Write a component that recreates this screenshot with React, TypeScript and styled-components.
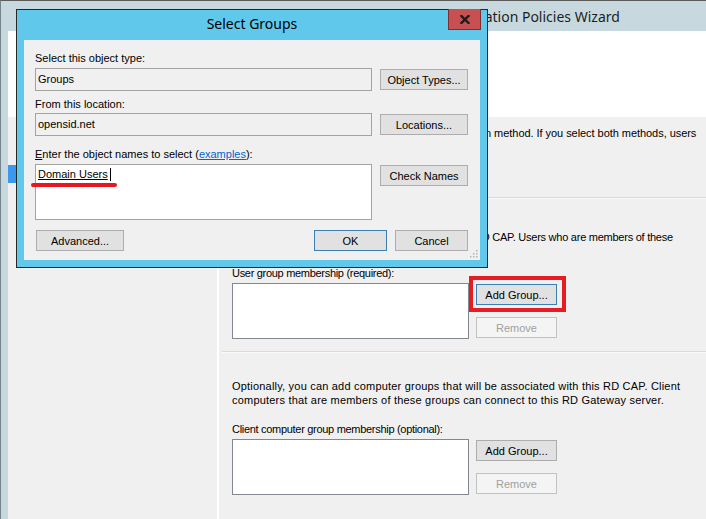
import React from 'react';
import styled, { createGlobalStyle } from 'styled-components';

const GlobalStyle = createGlobalStyle`
  html, body {
    margin: 0;
    padding: 0;
  }
  body {
    width: 706px;
    height: 519px;
    overflow: hidden;
    background: #f0f0f0;
    font-family: "Liberation Sans", Arial, sans-serif;
    font-size: 11px;
    color: #000;
  }
`;

export default function App() {
  return (
    <StScreen>
      <GlobalStyle />
      <StWizard>
        <StWizardTitleBar>New Authorization Policies Wizard</StWizardTitleBar>
        <StWizardHeader>
          <StHeaderTitle>Requirements</StHeaderTitle>
        </StWizardHeader>
        <StWizardMain>
          <StNav>
            <StNavItem>Authorization Policies</StNavItem>
            <StNavItem $active>Requirements</StNavItem>
            <StNavItem>Device Redirection</StNavItem>
            <StNavItem>Session Timeout</StNavItem>
            <StNavItem>RD CAP Summary</StNavItem>
          </StNav>
          <StContent>
            <StSection $top={9} $height={80}>
              <StPara $tracking={-0.05}>
                <StLine>Select at least one supported Windows authentication method. If you select both methods, users</StLine>
                <StLine>that use either method will be allowed to connect.</StLine>
              </StPara>
              <StCheckRow $mt={6}>
                <StCheck />
                Password
              </StCheckRow>
              <StCheckRow $mt={2}>
                <StCheck />
                Smart card
              </StCheckRow>
            </StSection>
            <StSeparator />
            <StSection $top={31} $height={152}>
              <StPara $tracking={-0.25}>
                <StLine>Add the user groups that will be associated with this RD CAP. Users who are members of these</StLine>
                <StLine>groups can connect to this RD Gateway server.</StLine>
              </StPara>
              <StFieldLabel $mt={8}>User group membership (required):</StFieldLabel>
              <StListRow>
                <StListBox />
                <StButtonColumn>
                  <StHighlight>
                    <StButton $default>Add Group...</StButton>
                  </StHighlight>
                  <StButton disabled>Remove</StButton>
                </StButtonColumn>
              </StListRow>
            </StSection>
            <StSeparator />
            <StSection $top={26}>
              <StPara $tracking={0.2}>
                <StLine>Optionally, you can add computer groups that will be associated with this RD CAP. Client</StLine>
                <StLine>computers that are members of these groups can connect to this RD Gateway server.</StLine>
              </StPara>
              <StFieldLabel $mt={15}>Client computer group membership (optional):</StFieldLabel>
              <StListRow>
                <StListBox />
                <StButtonColumn>
                  <StButton>Add Group...</StButton>
                  <StButton disabled>Remove</StButton>
                </StButtonColumn>
              </StListRow>
            </StSection>
          </StContent>
        </StWizardMain>
      </StWizard>

      <StDialog>
        <StDialogTitleBar>
          <StDialogTitle>Select Groups</StDialogTitle>
          <StCloseButton aria-label="Close">
            <svg width="10" height="9" viewBox="0 0 10 9">
              <path d="M1.5 1 L8.5 8 M8.5 1 L1.5 8" stroke="#1c1c1c" strokeWidth="2.3" strokeLinecap="square" />
            </svg>
          </StCloseButton>
        </StDialogTitleBar>
        <StDialogClient>
          <StDialogLabel $mt={0}>Select this object type:</StDialogLabel>
          <StDialogRow $mt={3}>
            <StTextField>Groups</StTextField>
            <StButton $w={88}>Object Types...</StButton>
          </StDialogRow>
          <StDialogLabel $mt={6}>From this location:</StDialogLabel>
          <StDialogRow $mt={2}>
            <StTextField>opensid.net</StTextField>
            <StButton $w={88}>Locations...</StButton>
          </StDialogRow>
          <StDialogLabel $mt={11}>
            <u>E</u>nter the object names to select (<StLink>examples</StLink>):
          </StDialogLabel>
          <StDialogRow $mt={3} $top>
            <StNamesArea>
              <StResolved>Domain Users</StResolved>
              <StCaret />
              <StRedMark />
            </StNamesArea>
            <StButtonSpacer>
              <StButton $w={88}>Check Names</StButton>
            </StButtonSpacer>
          </StDialogRow>
          <StBottomRow>
            <StButton $w={88}>Advanced...</StButton>
            <StBottomRight>
              <StButton $w={73} $default>OK</StButton>
              <StButton $w={73}>Cancel</StButton>
            </StBottomRight>
          </StBottomRow>
          <StSizeGrip width="8" height="8" viewBox="0 0 8 8">
            <rect x="6" y="0" width="1.5" height="1.5" fill="#b5b5b5" />
            <rect x="3" y="3" width="1.5" height="1.5" fill="#b5b5b5" />
            <rect x="6" y="3" width="1.5" height="1.5" fill="#b5b5b5" />
            <rect x="0" y="6" width="1.5" height="1.5" fill="#b5b5b5" />
            <rect x="3" y="6" width="1.5" height="1.5" fill="#b5b5b5" />
            <rect x="6" y="6" width="1.5" height="1.5" fill="#b5b5b5" />
          </StSizeGrip>
        </StDialogClient>
      </StDialog>
    </StScreen>
  );
}

const StScreen = styled.div`
  position: relative;
  width: 706px;
  height: 519px;
  overflow: hidden;
`;

/* background wizard window */

const StWizard = styled.div`
  display: flex;
  flex-direction: column;
  width: 706px;
  height: 519px;
  box-sizing: border-box;
  border-top: 1px solid #5b5b5b;
  border-left: 1px solid #74848b;
  padding-left: 7px;
  background: #c7d9df;
`;

const StWizardTitleBar = styled.div`
  flex-shrink: 0;
  height: 30px;
  display: flex;
  align-items: center;
  padding-left: 388px;
  font-family: "Noto Sans", "Open Sans", sans-serif;
  font-size: 14px;
  color: #1e1e1e;
  white-space: nowrap;
`;

const StWizardHeader = styled.div`
  flex-shrink: 0;
  height: 86px;
  background: #fff;
  padding: 12px 0 0 20px;
  box-sizing: border-box;
`;

const StHeaderTitle = styled.div`
  font-family: "Noto Sans", sans-serif;
  font-size: 15px;
  color: #1e1e1e;
`;

const StWizardMain = styled.div`
  flex: 1;
  display: flex;
  min-height: 0;
  background: #f0f0f0;
`;

const StNav = styled.nav`
  flex-shrink: 0;
  width: 211px;
  padding-top: 30px;
  box-sizing: border-box;
  border-right: 2px solid #fff;
`;

const StNavItem = styled.div<{ $active?: boolean }>`
  height: 18px;
  line-height: 18px;
  padding-left: 14px;
  background: ${(p) => (p.$active ? '#3c97ee' : 'transparent')};
  color: ${(p) => (p.$active ? '#fff' : '#000')};
`;

const StContent = styled.div`
  flex: 1;
  display: flex;
  flex-direction: column;
  min-width: 0;
`;

const StSection = styled.section<{ $top: number; $height?: number }>`
  flex: ${(p) => (p.$height ? '0 0 auto' : '1')};
  height: ${(p) => (p.$height ? `${p.$height}px` : 'auto')};
  box-sizing: border-box;
  padding: ${(p) => p.$top}px 0 0 13px;
  overflow: hidden;
`;

const StSeparator = styled.div`
  flex-shrink: 0;
  margin-left: 3px;
  border-top: 1px solid #d4dce2;
  border-bottom: 1px solid #fafafa;
`;

const StPara = styled.p<{ $tracking: number }>`
  margin: 0;
  line-height: 14px;
  letter-spacing: ${(p) => p.$tracking}px;
`;

const StLine = styled.span`
  display: block;
  white-space: nowrap;
`;

const StCheckRow = styled.div<{ $mt: number }>`
  display: flex;
  align-items: center;
  gap: 5px;
  height: 14px;
  margin-top: ${(p) => p.$mt}px;
`;

const StCheck = styled.span`
  width: 11px;
  height: 11px;
  box-sizing: border-box;
  border: 1px solid #333;
  background: #fff;
`;

const StFieldLabel = styled.div<{ $mt: number }>`
  margin-top: ${(p) => p.$mt}px;
  line-height: 14px;
  letter-spacing: -0.3px;
`;

const StListRow = styled.div`
  display: flex;
  align-items: flex-start;
  gap: 7px;
  margin-top: 3px;
`;

const StListBox = styled.div`
  width: 237px;
  height: 56px;
  box-sizing: border-box;
  background: #fff;
  border: 1px solid #828790;
`;

const StButtonColumn = styled.div`
  display: flex;
  flex-direction: column;
  gap: 12px;
  padding-top: 1px;
`;

const StButton = styled.button<{ $w?: number; $default?: boolean }>`
  width: ${(p) => p.$w ?? 81}px;
  height: 21px;
  box-sizing: border-box;
  margin: 0;
  padding: 0;
  border: 1px solid ${(p) => (p.$default ? '#3c7fb1' : '#adadad')};
  border-radius: 0;
  background: #e1e1e1;
  font-family: "Liberation Sans", Arial, sans-serif;
  font-size: 11px;
  color: #000;

  &:disabled {
    background: #f4f4f4;
    border-color: #c2c2c2;
    color: #a0a0a0;
  }
`;

const StHighlight = styled.div`
  position: relative;
  display: flex;

  &::after {
    content: '';
    position: absolute;
    inset: -8px -9px -7px -7px;
    border: 4px solid #e51c24;
    pointer-events: none;
  }
`;

/* Select Groups dialog (sits on top of the wizard) */

const StDialog = styled.div`
  position: absolute;
  left: 16px;
  top: 9px;
  width: 472px;
  height: 259px;
  box-sizing: border-box;
  display: flex;
  flex-direction: column;
  border: 1px solid #262626;
  padding: 0 7px 7px;
  background: #60c8eb;
`;

const StDialogTitleBar = styled.div`
  flex-shrink: 0;
  height: 30px;
  display: grid;
  grid-template-columns: 1fr auto 1fr;
  align-items: start;
`;

const StDialogTitle = styled.div`
  grid-column: 2;
  padding-top: 4px;
  font-family: "Noto Sans", "Open Sans", sans-serif;
  font-size: 14px;
  line-height: 20px;
  color: #000;
  white-space: nowrap;
`;

const StCloseButton = styled.div`
  grid-column: 3;
  justify-self: end;
  width: 33px;
  height: 21px;
  margin: -1px -1px 0 0;
  box-sizing: border-box;
  display: flex;
  align-items: center;
  justify-content: center;
  background: #c75050;
  border: 1px solid #7d2f2f;
  border-top: none;
`;

const StDialogClient = styled.div`
  position: relative;
  flex: 1;
  display: flex;
  flex-direction: column;
  padding: 11px 12px 0 11px;
  background: #f0f0f0;
`;

const StDialogLabel = styled.div<{ $mt: number }>`
  margin-top: ${(p) => p.$mt}px;
  line-height: 14px;
  white-space: nowrap;
`;

const StLink = styled.span`
  color: #0066cc;
  text-decoration: underline;
`;

const StDialogRow = styled.div<{ $mt: number; $top?: boolean }>`
  display: flex;
  align-items: ${(p) => (p.$top ? 'flex-start' : 'center')};
  gap: 8px;
  margin-top: ${(p) => p.$mt}px;
`;

const StTextField = styled.div`
  width: 337px;
  height: 23px;
  box-sizing: border-box;
  padding-left: 2px;
  line-height: 21px;
  border: 1px solid #a3a3a3;
  background: #f0f0f0;
`;

const StNamesArea = styled.div`
  position: relative;
  width: 337px;
  height: 56px;
  box-sizing: border-box;
  padding: 2px 0 0 2px;
  line-height: 14px;
  border: 1px solid #a3a3a3;
  background: #fff;
`;

const StResolved = styled.span`
  text-decoration: underline;
`;

const StCaret = styled.span`
  display: inline-block;
  width: 1px;
  height: 13px;
  margin-left: 2px;
  vertical-align: -3px;
  background: #000;
`;

const StRedMark = styled.span`
  position: absolute;
  left: -5px;
  top: 18px;
  width: 86px;
  height: 4px;
  border-radius: 2px;
  background: #e8161f;
`;

const StButtonSpacer = styled.div`
  padding-top: 1px;
`;

const StBottomRow = styled.div`
  display: flex;
  justify-content: space-between;
  margin-top: 10px;
  padding-left: 1px;
`;

const StBottomRight = styled.div`
  display: flex;
  gap: 8px;
`;

const StSizeGrip = styled.svg`
  position: absolute;
  right: 2px;
  bottom: 2px;
`;
